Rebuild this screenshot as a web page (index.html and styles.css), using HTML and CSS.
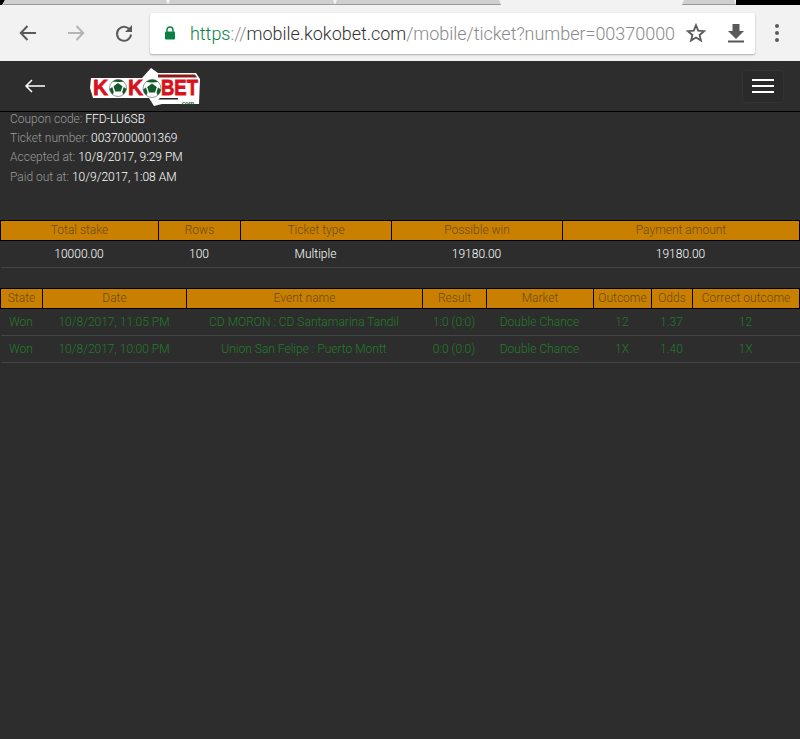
FILE: index.html
```html
<!DOCTYPE html>
<html lang="en">
<head>
  <meta charset="UTF-8" />
  <title>Ticket - Kokobet</title>
  <link rel="stylesheet" href="styles.css">
</head>
<body>
  <div class="tabstrip">
    <div class="tabstrip-start"></div>
    <div class="tab tab-first"></div>
    <div class="tab tab-second"></div>
    <div class="tab tab-third"></div>
    <div class="tab tab-active"></div>
    <div class="tab tab-last"></div>
    <div class="tabstrip-end"></div>
  </div>

  <div class="toolbar">
    <svg class="tool" width="24" height="24" viewBox="0 0 24 24"><path d="M20 12H5M11.500 5L4.800 12l6.700 7" fill="none" stroke="#5a5a5a" stroke-width="2"/></svg>
    <svg class="tool tool-forward" width="24" height="24" viewBox="0 0 24 24"><path d="M4 12h15M12.500 5l6.700 7-6.700 7" fill="none" stroke="#b4b4b4" stroke-width="2"/></svg>
    <svg class="tool tool-reload" width="24" height="24" viewBox="0 0 24 24"><path d="M18.200 9.500A7 7 0 1 0 19 13.500" fill="none" stroke="#5a5a5a" stroke-width="2"/><path d="M20 4v7h-7z" fill="#5a5a5a"/></svg>
    <div class="omnibox">
      <svg class="lock" width="12" height="14" viewBox="0 0 12 14"><path d="M3 6V4a3 3 0 0 1 6 0v2" fill="none" stroke="#0b8043" stroke-width="1.400"/><rect x="1" y="5.500" width="10" height="8" rx="1" fill="#0b8043"/></svg>
      <div class="url"><span class="url-scheme">https</span><span class="url-sep">://</span><span class="url-host">mobile.kokobet.com</span><span class="url-path">/mobile/ticket?number=00370000</span></div>
      <svg class="omni-icon" width="22" height="22" viewBox="0 0 24 24"><path d="M12 3.600l2.400 5.900 6.400.5-4.900 4.100 1.500 6.200-5.400-3.300-5.400 3.300 1.500-6.200L3.200 10l6.400-.5z" fill="none" stroke="#5a5a5a" stroke-width="2"/></svg>
      <svg class="omni-icon omni-download" width="18" height="22" viewBox="0 0 18 22"><path d="M5.500 2h7v7H17l-8 8-8-8h4.500z" fill="#5a5a5a"/><rect x="1" y="18.500" width="16" height="2" fill="#5a5a5a"/></svg>
    </div>
    <div class="dots"><span></span><span></span><span></span></div>
  </div>

  <header class="site-header">
    <svg class="back" width="22" height="14" viewBox="0 0 22 14"><path d="M21 7H2M8 1L2 7l6 6" fill="none" stroke="#fff" stroke-width="1.500"/></svg>
    <svg class="logo" width="120" height="40" viewBox="0 -2 120 40">
      <path d="M1 10H52L61 0 68 5H106L110 11 109 36H72L64 38 59 30H3L0 20z" fill="#fff"/>
      <path d="M68 6.500H105L107 9.500H68z" fill="#8c1a1a"/>
      <path d="M70 30H88V31.500H68z" fill="#222"/>
      <text x="3" y="27" class="logo-text" textLength="15" lengthAdjust="spacingAndGlyphs">K</text>
      <circle cx="28" cy="20" r="8.500" fill="#fff" stroke="#333" stroke-width="0.500"/>
      <path d="M28 15l4.500 3.300-1.700 5.200h-5.600l-1.700-5.200zM28 11.500a8.500 8.500 0 0 1 6 2.300L28 14l-5.500-.4A8.500 8.500 0 0 1 28 11.500zM19.500 21l2.800-2 1.500 5-1 2.500a8.500 8.500 0 0 1-3.300-5.500zM36.500 21a8.500 8.500 0 0 1-3.300 5.500l-1-2.500 1.500-5z" fill="#14592a"/>
      <text x="38" y="27" class="logo-text" textLength="15" lengthAdjust="spacingAndGlyphs">K</text>
      <circle cx="62" cy="20.500" r="9" fill="#fff" stroke="#333" stroke-width="0.500"/>
      <path d="M62 15.500l4.800 3.500-1.800 5.500h-6l-1.800-5.500zM62 11.500a9 9 0 0 1 6.300 2.400L62 14.500l-5.800-.6A9 9 0 0 1 62 11.500zM53 21.500l3-2 1.500 5-1 2.800a9 9 0 0 1-3.500-5.800zM71 21.500a9 9 0 0 1-3.500 5.800l-1-2.800 1.500-5z" fill="#14592a"/>
      <text x="71" y="27" class="logo-text" textLength="37" lengthAdjust="spacingAndGlyphs">BET</text>
      <text x="90" y="37" class="logo-com">.com</text>
    </svg>
    <button class="menu-btn"><span></span><span></span><span></span></button>
  </header>

  <section class="ticket-info">
    <div>Coupon code: <b>FFD-LU6SB</b></div>
    <div>Ticket number: <b>0037000001369</b></div>
    <div>Accepted at: <b>10/8/2017, 9:29 PM</b></div>
    <div>Paid out at: <b>10/9/2017, 1:08 AM</b></div>
  </section>

  <table class="grid summary">
    <colgroup>
      <col class="c-stake"><col class="c-rows"><col class="c-type"><col class="c-win"><col class="c-pay">
    </colgroup>
    <thead>
      <tr><th>Total stake</th><th>Rows</th><th>Ticket type</th><th>Possible win</th><th>Payment amount</th></tr>
    </thead>
    <tbody>
      <tr><td>10000.00</td><td>100</td><td>Multiple</td><td>19180.00</td><td>19180.00</td></tr>
    </tbody>
  </table>

  <table class="grid events">
    <colgroup>
      <col class="c-state"><col class="c-date"><col class="c-event"><col class="c-result"><col class="c-market"><col class="c-outcome"><col class="c-odds"><col class="c-correct">
    </colgroup>
    <thead>
      <tr><th>State</th><th>Date</th><th>Event name</th><th>Result</th><th>Market</th><th>Outcome</th><th>Odds</th><th>Correct outcome</th></tr>
    </thead>
    <tbody>
      <tr><td>Won</td><td>10/8/2017, 11:05 PM</td><td>CD MORON : CD Santamarina Tandil</td><td>1:0 (0:0)</td><td>Double Chance</td><td>12</td><td>1.37</td><td>12</td></tr>
      <tr><td>Won</td><td>10/8/2017, 10:00 PM</td><td>Union San Felipe : Puerto Montt</td><td>0:0 (0:0)</td><td>Double Chance</td><td>1X</td><td>1.40</td><td>1X</td></tr>
    </tbody>
  </table>
</body>
</html>
```

FILE: styles.css
```css
html, body {
  margin: 0;
  height: 739px;
  overflow: hidden;
}
body {
  background: #2d2d2d;
  font-family: Roboto, sans-serif;
  font-size: 12px;
  color: #fff;
}

/* browser chrome */
.tabstrip {
  display: flex;
  height: 5px;
  background: #f2f2f2;
}
.tabstrip-start {
  width: 5px;
  background: #000;
  clip-path: polygon(0 0, 100% 0, 40% 100%, 0 100%);
}
.tab {
  background: #cfcfcf;
  border-bottom: 1px solid #9a9a9a;
  box-sizing: border-box;
  clip-path: polygon(0 100%, 2px 0, calc(100% - 2px) 0, 100% 100%);
}
.tab-first { width: 165px; margin-left: -2px; }
.tab-second { width: 167px; }
.tab-third { width: 166px; }
.tab-active { width: 181px; background: #f2f2f2; border: 0; }
.tab-last { width: 54px; }
.tabstrip-end { flex: 1; background: #000; }

.toolbar {
  display: flex;
  align-items: center;
  height: 56px;
  background: #f2f2f2;
  padding-left: 16px;
  box-sizing: border-box;
}
.tool { flex: none; }
.tool-forward { margin-left: 24px; }
.tool-reload { margin-left: 24px; }
.omnibox {
  display: flex;
  align-items: center;
  width: 605px;
  height: 41px;
  margin-left: 14px;
  background: #fff;
  border-radius: 2px;
  box-shadow: 0 1px 2px rgba(0,0,0,0.3);
  box-sizing: border-box;
  padding-left: 14px;
}
.lock { flex: none; }
.url {
  width: 488px;
  margin-left: 14px;
  font-size: 18px;
  letter-spacing: -0.03px;
  font-weight: 300;
  white-space: nowrap;
}
.url-scheme { color: #0b8043; }
.url-sep, .url-path { color: #8a8a8a; }
.url-host { color: #333; }
.omni-icon { flex: none; margin-left: 7px; }
.omni-download { margin-left: 20px; }
.dots {
  display: flex;
  flex-direction: column;
  gap: 3px;
  margin-left: 20px;
}
.dots span {
  width: 4px;
  height: 4px;
  border-radius: 50%;
  background: #5a5a5a;
}

/* site header */
.site-header {
  display: flex;
  align-items: center;
  height: 51px;
  box-sizing: border-box;
  border-bottom: 1px solid #000;
  padding: 0 16px 0 24px;
}
.back { flex: none; }
.logo { flex: none; margin-left: 44px; }
.logo-text {
  font-family: "Liberation Sans", sans-serif;
  font-size: 22px;
  font-weight: bold;
  fill: #d8111b;
  stroke: #d8111b;
  stroke-width: 0.8;
}
.logo-com {
  font-family: "Liberation Sans", sans-serif;
  font-size: 6px;
  font-weight: bold;
  fill: #14592a;
}
.menu-btn {
  display: flex;
  flex-direction: column;
  justify-content: center;
  gap: 4px;
  width: 42px;
  height: 33px;
  margin-left: auto;
  padding: 0 9px;
  background: #2a2a2a;
  border: 1px solid #333;
  border-radius: 4px;
  box-sizing: border-box;
}
.menu-btn span {
  display: block;
  height: 2px;
  background: #fff;
}

/* ticket info */
.ticket-info {
  margin-top: -2px;
  padding: 0 10px;
  height: 110px;
  color: #9a9a9a;
  font-weight: 300;
  line-height: 19.2px;
}
.ticket-info b {
  color: #fff;
  font-weight: 300;
}

/* tables */
.grid {
  width: 799px;
  table-layout: fixed;
  border-collapse: collapse;
  font-weight: 300;
}
.grid th {
  height: 20px;
  padding: 0 0 1px;
  background: #c98000;
  border: 1px solid #000;
  color: #6b4a10;
  font-weight: 300;
  box-sizing: border-box;
}
.grid td {
  height: 27px;
  padding: 0 1px 0 0;
  text-align: center;
  border-bottom: 1px solid #444;
  box-sizing: border-box;
  white-space: nowrap;
}
.summary { margin-bottom: 20px; }
.summary td { color: #fff; }
.events td { color: #1f7d26; }

.c-stake { width: 158px; }
.c-rows { width: 82px; }
.c-type { width: 151px; }
.c-win { width: 171px; }
.c-pay { width: 237px; }

.c-state { width: 42px; }
.c-date { width: 144px; }
.c-event { width: 236px; }
.c-result { width: 64px; }
.c-market { width: 107px; }
.c-outcome { width: 58px; }
.c-odds { width: 41px; }
.c-correct { width: 107px; }
```
